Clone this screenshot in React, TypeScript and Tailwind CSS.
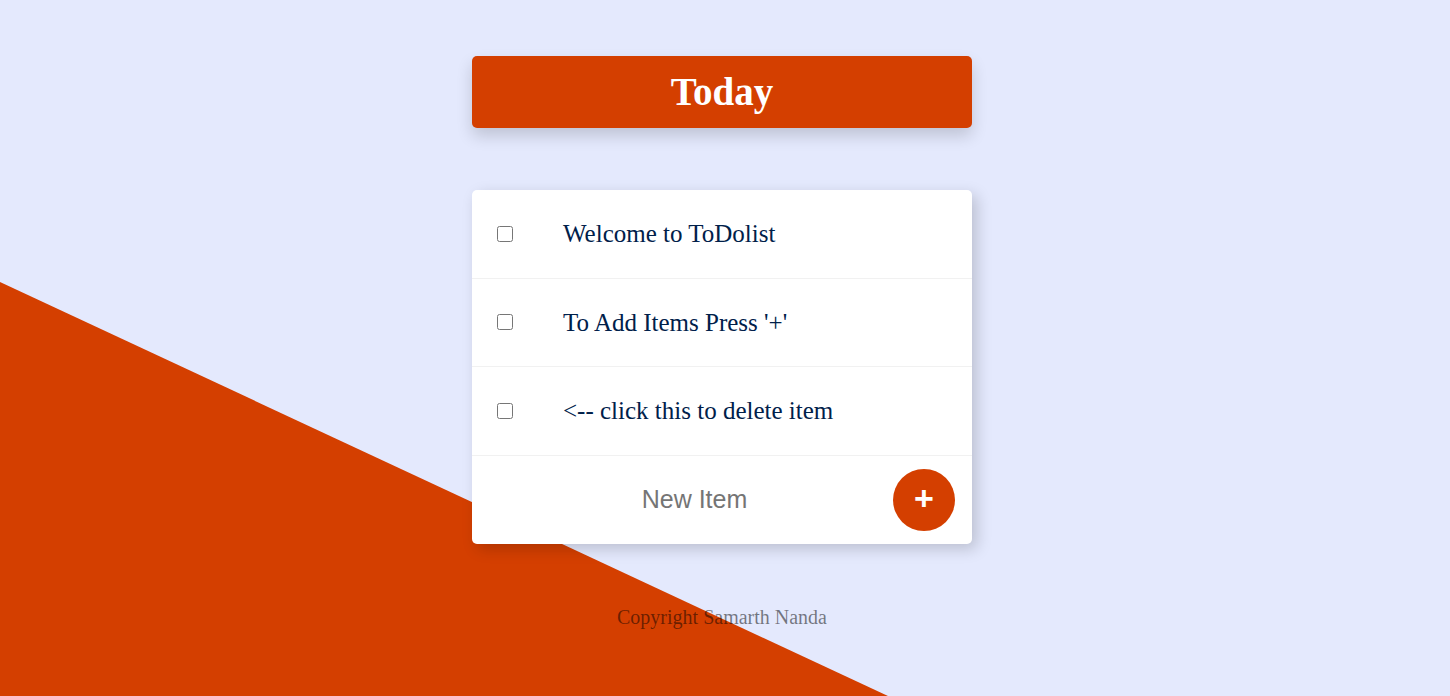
import React from 'react';

const items = ['Welcome to ToDolist', "To Add Items Press '+'", '<-- click this to delete item'];

export default function App() {
  return (
    <div className="relative w-full h-[696px] overflow-hidden bg-[#E4E9FD]">
      {/* diagonal background shape */}
      <div className="absolute inset-0 bg-[#D43F00] [clip-path:polygon(0_282px,888px_696px,0_696px)]" />

      <div className="relative w-[500px] ml-[472px] pt-[56px]">
        <div className="h-[72px] flex items-center justify-center pb-[2px] bg-[#D43F00] rounded-[5px] shadow-[0_8px_16px_rgba(0,0,0,0.16)]">
          <h1 className="text-white font-bold text-[39px] leading-none font-['Liberation_Serif',serif]">Today</h1>
        </div>

        <div className="mt-[62px] bg-white rounded-[5px] shadow-[5px_5px_15px_rgba(0,0,0,0.18)]">
          {items.map((t, i) => (
            <div key={i} className="h-[88.5px] flex items-center px-[25px] border-b border-[#F1F1F1]">
              <input type="checkbox" className="w-[16px] h-[16px] m-0" />
              <p className="ml-[50px] text-[25px] text-[#00204A] font-['Liberation_Serif',serif]">{t}</p>
            </div>
          ))}
          <form className="h-[88.5px] flex items-center pr-[17px]" onSubmit={(e) => e.preventDefault()}>
            <input
              type="text"
              placeholder="New Item"
              className="flex-1 min-w-0 pl-[24px] text-center text-[25px] outline-none placeholder:text-[#757575] font-['Liberation_Sans',sans-serif]"
            />
            <button type="submit" className="w-[62px] h-[62px] rounded-full bg-[#D43F00] text-white text-[34px] font-bold leading-none flex items-center justify-center pb-[4px] font-['Liberation_Sans',sans-serif]">
              +
            </button>
          </form>
        </div>

        <footer className="mt-[58px] text-center text-[20px] text-black/50 font-['Liberation_Serif',serif]">
          Copyright Samarth Nanda
        </footer>
      </div>
    </div>
  );
}
